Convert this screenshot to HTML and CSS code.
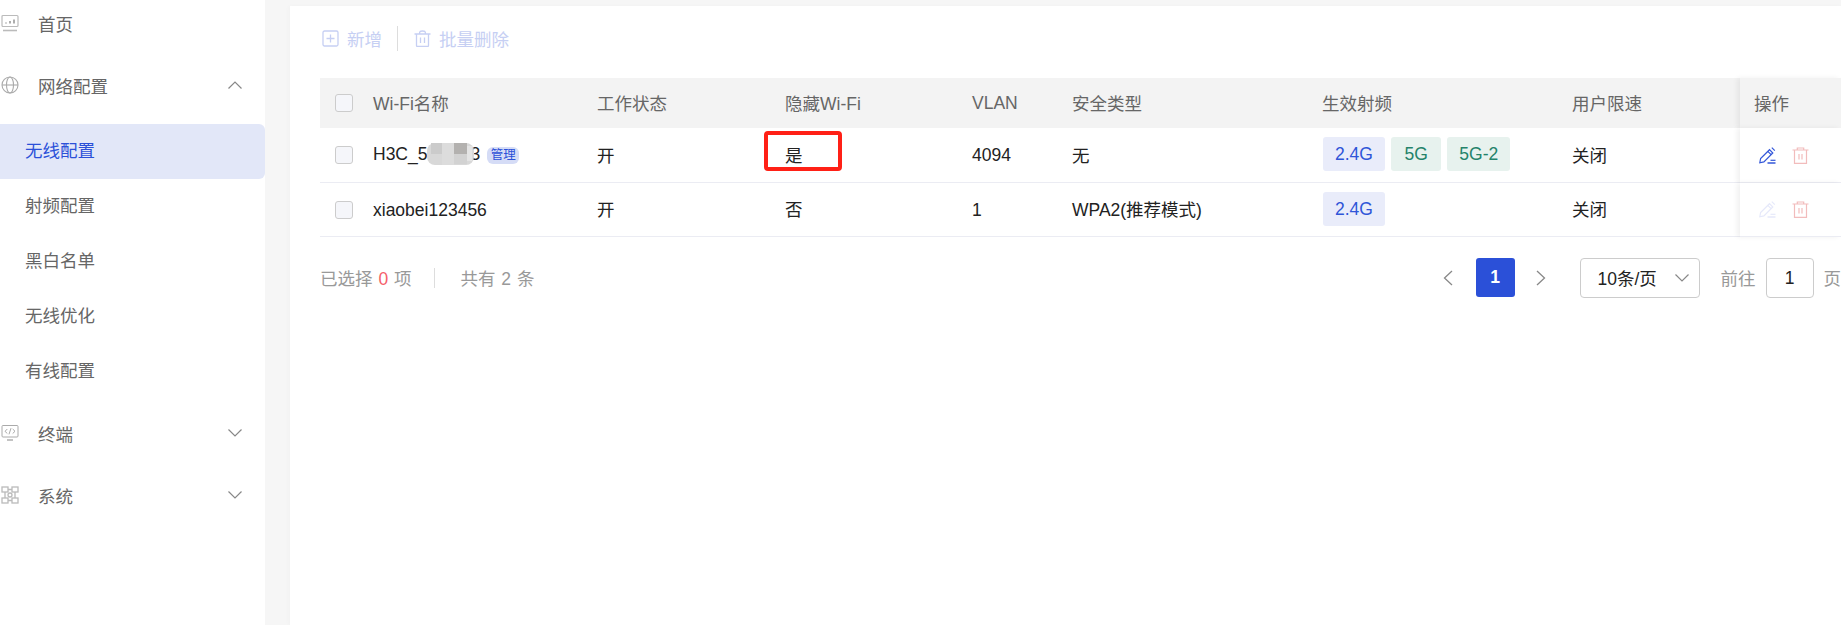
FILE: index.html
```html
<!DOCTYPE html>
<html lang="zh-CN">
<head>
<meta charset="utf-8">
<title>无线配置</title>
<link rel="stylesheet" href="styles.css">
</head>
<body>
<div class="app">
  <aside class="sidebar">
    <nav class="menu">
      <div class="menu-item">
        <svg class="menu-icon" viewBox="0 0 18 18" fill="none" stroke="#bbb"><rect x="1" y="1.5" width="16" height="11" rx="1" stroke-width="1.2"/><path d="M5 9.5v-1M9 9.5V7M13 9.5V5.500" stroke="#999" stroke-width="1.6"/><path d="M2 16.500h14" stroke-width="1.6"/></svg>
        <span>首页</span>
      </div>
      <div class="menu-item">
        <svg class="menu-icon" viewBox="0 0 18 18" fill="none" stroke="#aaa" stroke-width="1.100"><circle cx="9" cy="9" r="8"/><ellipse cx="9" cy="9" rx="3.500" ry="8"/><path d="M1 9h16"/></svg>
        <span>网络配置</span>
        <svg class="chevron" viewBox="0 0 14 8" fill="none" stroke="#888" stroke-width="1.200"><path d="M0.500 7.500 7 1l6.500 6.500"/></svg>
      </div>
      <div class="submenu">
        <div class="sub-item active">无线配置</div>
        <div class="sub-item">射频配置</div>
        <div class="sub-item">黑白名单</div>
        <div class="sub-item">无线优化</div>
        <div class="sub-item">有线配置</div>
      </div>
      <div class="menu-item">
        <svg class="menu-icon" viewBox="0 0 18 18" fill="none" stroke="#aaa" stroke-width="1"><rect x="1" y="1.500" width="16" height="11.500" rx="1"/><path d="M6.300 5 4 7.300 6.300 9.500M11.700 5 14 7.300 11.700 9.500M10 4.200 8 10.300"/><path d="M6 16h6" stroke-width="1.400"/></svg>
        <span>终端</span>
        <svg class="chevron" viewBox="0 0 14 8" fill="none" stroke="#888" stroke-width="1.200"><path d="M0.500 0.500 7 7l6.500-6.500"/></svg>
      </div>
      <div class="menu-item">
        <svg class="menu-icon" viewBox="0 0 18 18" fill="none" stroke="#bbb" stroke-width="1.300"><rect x="1" y="1" width="6" height="5"/><rect x="11" y="1" width="6" height="5"/><rect x="1" y="12" width="6" height="5"/><rect x="11" y="12" width="6" height="5"/><circle cx="9" cy="9" r="2"/><path d="M4 6v6M14 6v6M7 3.500h4M7 14.500h4"/></svg>
        <span>系统</span>
        <svg class="chevron" viewBox="0 0 14 8" fill="none" stroke="#888" stroke-width="1.200"><path d="M0.500 0.500 7 7l6.500-6.500"/></svg>
      </div>
    </nav>
  </aside>
  <main class="content">
    <div class="toolbar">
      <div class="tool">
        <svg class="tool-icon" viewBox="0 0 17 17" fill="none" stroke="#c6cff3" stroke-width="1.300"><rect x="1" y="1" width="15" height="15" rx="1.500"/><path d="M8.500 4.500v8M4.500 8.500h8"/></svg>
        <span>新增</span>
      </div>
      <div class="tool-divider"></div>
      <div class="tool">
        <svg class="tool-icon" viewBox="0 0 17 17" fill="none" stroke="#c6cff3" stroke-width="1.300"><path d="M0.500 4h16M5.500 4c0-3 1-3 3-3s3 0 3 3M2.500 4v11.500a1 1 0 0 0 1 1h10a1 1 0 0 0 1-1V4M6.500 7.500v5.500M10.500 7.500v5.500"/></svg>
        <span>批量删除</span>
      </div>
    </div>
    <table class="grid">
      <colgroup>
        <col class="c-check"><col class="c-name"><col class="c-state"><col class="c-hidden"><col class="c-vlan"><col class="c-sec"><col class="c-rf"><col class="c-speed"><col class="c-op">
      </colgroup>
      <thead>
        <tr>
          <th class="check-cell"><span class="checkbox"></span></th>
          <th>Wi-Fi名称</th>
          <th>工作状态</th>
          <th>隐藏Wi-Fi</th>
          <th class="latin">VLAN</th>
          <th>安全类型</th>
          <th>生效射频</th>
          <th>用户限速</th>
          <th class="head-op">操作</th>
        </tr>
      </thead>
      <tbody>
        <tr class="row-a">
          <td class="check-cell"><span class="checkbox"></span></td>
          <td><span class="wifi-name">H3C_5<span class="masked"><svg class="mosaic" viewBox="0 0 47 22" preserveAspectRatio="none"><rect width="47" height="22" rx="8" fill="#d8d8d8"/><rect x="4" width="11" height="11" fill="#cbcbcb"/><rect x="15" width="12" height="22" fill="#dcdcdc"/><rect x="27" width="13" height="11" fill="#b3b1af"/><rect x="27" y="11" width="13" height="10" fill="#d2d2d2"/><rect x="40" y="3" width="5" height="15" fill="#e4e4e4"/></svg></span>3</span><span class="badge">管理</span></td>
          <td>开</td>
          <td>是</td>
          <td class="latin">4094</td>
          <td>无</td>
          <td><span class="tags"><span class="tag tag-blue">2.4G</span><span class="tag tag-green tag-5g">5G</span><span class="tag tag-green">5G-2</span></span></td>
          <td>关闭</td>
          <td class="op-cell">
            <span class="ops">
              <svg class="op-icon" viewBox="0 0 17 17" fill="none" stroke="#3357d9" stroke-width="1.200"><path d="M0.800 15.800 1.600 11.500 10.500 2.700l3.300 3.300-8.900 8.900ZM8.800 4.400l3.300 3.300M12.800 0.600l3 3"/><path d="M8.500 16h8" stroke-width="1.500"/><path d="M11.500 13.300h5"/></svg>
              <svg class="op-icon" viewBox="0 0 16 17" fill="none" stroke="#f2bcbc" stroke-width="1.200"><path d="M0 3h16M4.800 3V1h6.400v2M2 3v13.400h12V3M6.500 7v5.500M9.500 7v5.500"/></svg>
            </span>
          </td>
        </tr>
        <tr class="row-b">
          <td class="check-cell"><span class="checkbox"></span></td>
          <td class="latin-low">xiaobei123456</td>
          <td>开</td>
          <td>否</td>
          <td class="latin-low">1</td>
          <td>WPA2(推荐模式)</td>
          <td><span class="tags"><span class="tag tag-blue">2.4G</span></span></td>
          <td>关闭</td>
          <td class="op-cell">
            <span class="ops">
              <svg class="op-icon" viewBox="0 0 17 17" fill="none" stroke="#e6e9fa" stroke-width="1.200"><path d="M0.800 15.800 1.600 11.500 10.500 2.700l3.300 3.300-8.900 8.900ZM8.800 4.400l3.300 3.300M12.800 0.600l3 3"/><path d="M8.500 16h8" stroke-width="1.500"/><path d="M11.500 13.300h5"/></svg>
              <svg class="op-icon" viewBox="0 0 16 17" fill="none" stroke="#f2bcbc" stroke-width="1.200"><path d="M0 3h16M4.800 3V1h6.400v2M2 3v13.400h12V3M6.500 7v5.500M9.500 7v5.500"/></svg>
            </span>
          </td>
        </tr>
      </tbody>
    </table>
    <div class="footer">
      <div class="summary">
        <span>已选择 <em class="count">0</em> 项</span>
        <span class="summary-divider"></span>
        <span>共有 2 条</span>
      </div>
      <div class="pager">
        <svg class="pager-arrow" viewBox="0 0 10 16" fill="none" stroke="#888" stroke-width="1.300"><path d="M9 1 1.500 8 9 15"/></svg>
        <span class="page-current">1</span>
        <svg class="pager-arrow" viewBox="0 0 10 16" fill="none" stroke="#888" stroke-width="1.300"><path d="M1 1l7.500 7L1 15"/></svg>
        <div class="page-size">
          <span>10条/页</span>
          <svg class="select-arrow" viewBox="0 0 14 8" fill="none" stroke="#888" stroke-width="1.200"><path d="M0.500 0.500 7 7l6.500-6.500"/></svg>
        </div>
        <span class="goto">前往</span>
        <span class="page-input">1</span>
        <span class="goto">页</span>
      </div>
    </div>
    <div class="highlight"></div>
  </main>
</div>
</body>
</html>
```

FILE: styles.css
```css
* { box-sizing: border-box; }

html, body {
  margin: 0;
  height: 100%;
  overflow: hidden;
  background: #f6f6f6;
}

body {
  font-family: "Liberation Sans", "Noto Sans CJK SC", sans-serif;
  font-size: 17.5px;
  color: #222;
}

.app {
  display: flex;
  height: 625px;
  overflow: hidden;
}

.sidebar {
  flex: 0 0 265px;
  background: #fff;
  overflow: hidden;
}

.menu {
  margin-top: -8px;
  color: #666;
}

.menu-item {
  display: flex;
  align-items: center;
  height: 62px;
  padding-left: 1px;
}

.menu-icon {
  width: 18px;
  height: 18px;
  margin-right: 19px;
  flex: none;
}

.chevron {
  width: 14px;
  height: 8px;
  margin-left: auto;
  margin-right: 23px;
}

.submenu {
  padding: 8px 0 3px;
}

.sub-item {
  height: 55px;
  line-height: 55px;
  padding-left: 25px;
}

.sub-item.active {
  background: #e2e7f8;
  color: #2b50d8;
  border-radius: 0 6px 6px 0;
}

.content {
  position: relative;
  flex: 0 0 1551px;
  margin: 6px 0 0 25px;
  padding: 0 2px 0 30px;
  background: #fff;
  box-shadow: -2px 0 4px rgba(0, 0, 0, 0.02);
}

.toolbar {
  display: flex;
  align-items: center;
  height: 72px;
  padding: 0 0 8px 2px;
  color: #c6cff3;
}

.tool {
  display: flex;
  align-items: center;
  gap: 8px;
}

.tool-icon {
  width: 17px;
  height: 17px;
}

.tool-divider {
  width: 1px;
  height: 25px;
  margin: 0 16px 0 15px;
  background: #ddd;
}

.grid {
  width: 1521px;
  table-layout: fixed;
  border-collapse: separate;
  border-spacing: 0;
}

.c-check { width: 41px; }
.c-name { width: 224px; }
.c-state { width: 188px; }
.c-hidden { width: 187px; }
.c-vlan { width: 100px; }
.c-sec { width: 250px; }
.c-rf { width: 250px; }
.c-speed { width: 180px; }
.c-op { width: 101px; }

.grid th {
  height: 50px;
  padding: 0 0 2px 12px;
  background: #f3f3f3;
  color: #666;
  font-weight: 400;
  text-align: left;
}

.grid td {
  padding: 0 0 2px 12px;
  border-bottom: 1px solid #ebecf3;
  background: #fff;
}

.grid .latin {
  padding-bottom: 0;
}

.grid .latin-low {
  padding-top: 2px;
  padding-bottom: 0;
}

.row-a td { height: 55px; }
.row-b td { height: 54px; }

.grid .check-cell {
  padding-left: 15px;
  padding-bottom: 0;
  line-height: 0;
}

.grid .head-op {
  padding-left: 14px;
  box-shadow: -3px 0 5px rgba(0, 0, 0, 0.06);
}

.grid .op-cell {
  padding-left: 15px;
  padding-bottom: 0;
  box-shadow: -3px 0 5px rgba(0, 0, 0, 0.06);
}

.checkbox {
  display: inline-block;
  width: 18px;
  height: 18px;
  background: #f5f6fa;
  border: 1px solid #ccc;
  border-radius: 3px;
}

.wifi-name {
  position: relative;
}

.masked {
  position: relative;
  display: inline-block;
  width: 43px;
  height: 1px;
}

.mosaic {
  position: absolute;
  left: 0;
  top: -16px;
  width: 47px;
  height: 22px;
}

.badge {
  display: inline-block;
  width: 32px;
  height: 17px;
  margin-left: 7px;
  border-radius: 6px;
  background: #d5dcf6;
  color: #2b50d8;
  font-size: 12.500px;
  line-height: 17px;
  text-align: center;
  vertical-align: 1px;
}

.tags {
  display: flex;
  gap: 6px;
  padding-left: 1px;
}

.tag {
  display: block;
  height: 34px;
  padding: 0 12px;
  border-radius: 3px;
  line-height: 34px;
}

.tag-5g {
  padding: 0 13.500px;
}

.tag-blue {
  background: #e9ecfa;
  color: #2f55d8;
}

.tag-green {
  background: #e7f2ee;
  color: #24836a;
}

.ops {
  display: flex;
  align-items: center;
  gap: 16px;
  padding-left: 4px;
}

.op-icon {
  width: 17px;
  height: 17px;
}

.footer {
  display: flex;
  justify-content: space-between;
  align-items: center;
  margin-top: 21px;
  height: 39px;
  color: #999;
}

.summary {
  display: flex;
  align-items: center;
  word-spacing: 1px;
}

.count {
  font-style: normal;
  color: #f5606a;
}

.summary-divider {
  width: 1px;
  height: 20px;
  margin: 0 25px 0 23px;
  background: #ddd;
}

.pager {
  display: flex;
  align-items: center;
}

.pager-arrow {
  width: 10px;
  height: 16px;
}

.page-current {
  width: 39px;
  height: 39px;
  margin: 0 21px 0 23px;
  border-radius: 3px;
  background: #2b50d8;
  color: #fff;
  font-weight: 700;
  line-height: 39px;
  text-align: center;
}

.page-size {
  display: flex;
  align-items: center;
  justify-content: space-between;
  width: 120px;
  height: 40px;
  margin: 0 21px 0 34px;
  padding: 0 10px 0 17px;
  border: 1px solid #ccc;
  border-radius: 4px;
  color: #222;
}

.select-arrow {
  width: 14px;
  height: 8px;
}

.page-input {
  width: 48px;
  height: 40px;
  margin: 0 10px;
  border: 1px solid #ccc;
  border-radius: 4px;
  color: #222;
  line-height: 38px;
  text-align: center;
}

.highlight {
  position: absolute;
  left: 474px;
  top: 125px;
  width: 78px;
  height: 40px;
  border: 4px solid #ff2016;
  border-radius: 4px;
}
```
